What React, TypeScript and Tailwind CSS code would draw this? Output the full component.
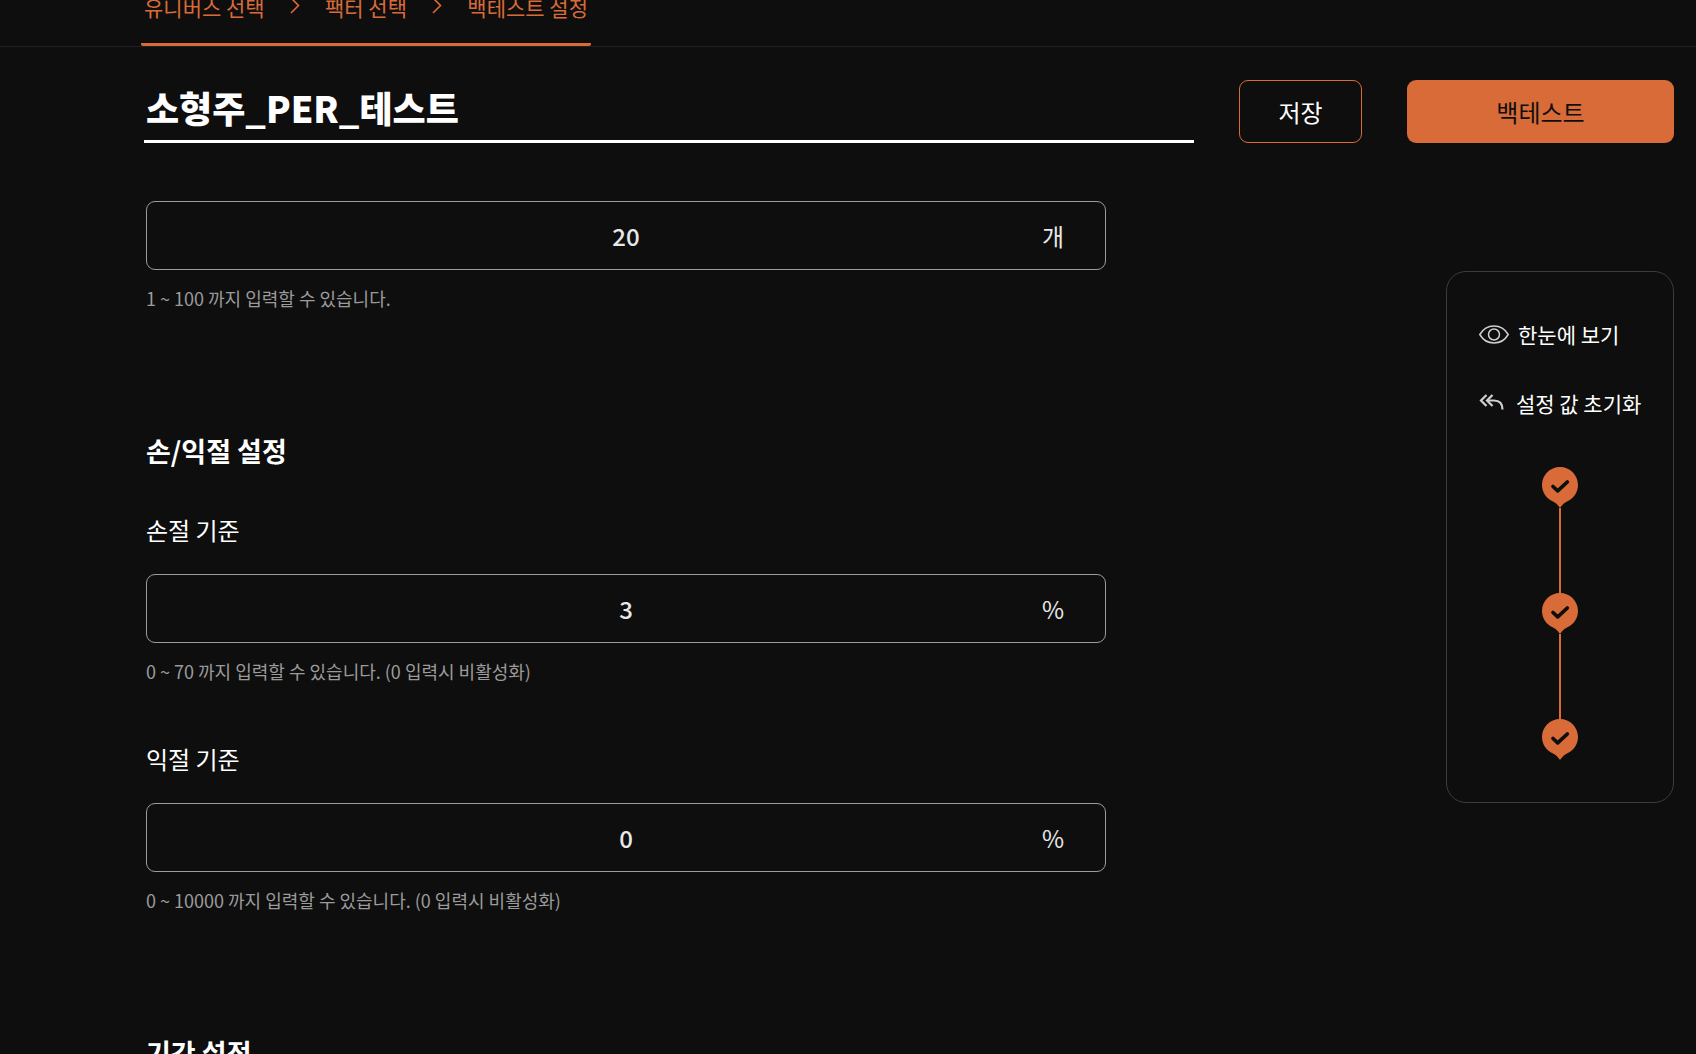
import React, { useState } from "react";

const steps = ["유니버스 선택", "팩터 선택", "백테스트 설정"];

export default function App() {
  const [name, setName] = useState("소형주_PER_테스트");

  return (
    <div className="h-screen overflow-hidden flex flex-col bg-[#0e0e0e] text-white font-['Noto_Sans_CJK_KR','Noto_Sans',sans-serif]">
      <StepNav />

      <header className="shrink-0 flex items-start pl-36 pr-[22px] pt-[33px]">
        <input
          aria-label="전략 이름"
          value={name}
          onChange={e => setName(e.target.value)}
          className="flex-1 min-w-0 h-[63px] border-b-[3px] border-white bg-transparent pl-[2px] pb-[6px] text-4xl font-black outline-none"
        />
        <button className="ml-[45px] w-[123px] h-[63px] rounded-[9px] border border-[#d96b38] text-2xl">저장</button>
        <button className="ml-[45px] w-[267px] h-[63px] rounded-[9px] bg-[#d96b38] text-2xl text-[#0e0e0e]">백테스트</button>
      </header>

      <div className="flex-1 min-h-0 flex items-start justify-between gap-8 pl-[146px] pr-[22px] pt-[58px]">
        <main className="w-full max-w-[960px]">
          <NumberField id="count" ariaLabel="종목 수" initial="20" unit="개" hint="1 ~ 100 까지 입력할 수 있습니다." />

          <SectionTitle>손/익절 설정</SectionTitle>
          <div className="flex flex-col gap-4">
            <NumberField id="stop-loss" label="손절 기준" initial="3" unit="%" hint="0 ~ 70 까지 입력할 수 있습니다. (0 입력시 비활성화)" />
            <NumberField id="take-profit" label="익절 기준" initial="0" unit="%" hint="0 ~ 10000 까지 입력할 수 있습니다. (0 입력시 비활성화)" />
          </div>

          <SectionTitle>기간 설정</SectionTitle>
        </main>

        <SidePanel />
      </div>
    </div>
  );
}

function StepNav() {
  return (
    <nav className="shrink-0 h-[47px] border-b border-[#202020] pl-[141px] flex">
      <ol className="w-[450px] h-[46px] flex items-start justify-between rounded-[2px] border-b-[3px] border-[#d96b38] px-[3px] text-[21px] leading-[30px] text-[#d96b38]">
        {steps.map((step, i) => (
          <React.Fragment key={step}>
            {i > 0 && (
              <li aria-hidden="true" className="-mt-1">
                <svg width="10" height="20" viewBox="0 0 10 20" fill="none" stroke="currentColor" strokeWidth="1.6">
                  <path d="M1 2l7.500 7.500L1 17" />
                </svg>
              </li>
            )}
            <li className="-mt-2">
              <a href="#">{step}</a>
            </li>
          </React.Fragment>
        ))}
      </ol>
    </nav>
  );
}

function SectionTitle({ children }: { children: React.ReactNode }) {
  return <h2 className="mt-[118px] text-[27px] leading-[42px] font-bold">{children}</h2>;
}

type NumberFieldProps = {
  id: string;
  label?: string;
  ariaLabel?: string;
  initial: string;
  unit: string;
  hint: string;
};

function NumberField({ id, label, ariaLabel, initial, unit, hint }: NumberFieldProps) {
  const [value, setValue] = useState(initial);

  return (
    <div>
      {label && (
        <label htmlFor={id} className="block pt-10 pb-[26px] text-2xl leading-9">
          {label}
        </label>
      )}
      <div className="relative">
        <input
          id={id}
          aria-label={ariaLabel}
          inputMode="numeric"
          value={value}
          onChange={e => setValue(e.target.value)}
          className="block w-full h-[69px] rounded-[9px] border border-[#9b9b9b] bg-transparent px-16 text-center text-2xl font-medium text-[#e8e8e8] outline-none"
        />
        <span className="absolute inset-y-0 right-[42px] flex items-center text-2xl text-[#e8e8e8]">{unit}</span>
      </div>
      <p className="mt-[14px] text-lg leading-7 text-[#9b9b9b]">{hint}</p>
    </div>
  );
}

function SidePanel() {
  return (
    <aside className="shrink-0 mt-[70px] w-[228px] rounded-[20px] border border-[#3c3c3c] pt-[46px] pb-[42px] pl-8 pr-4 text-[21px] leading-8">
      <button className="flex items-center gap-[9px] whitespace-nowrap">
        <EyeIcon />
        한눈에 보기
      </button>
      <button className="mt-[37px] flex items-center gap-[11px] whitespace-nowrap">
        <ReplyAllIcon />
        설정 값 초기화
      </button>
      <ol className="mt-12 -ml-4 flex flex-col items-center">
        {steps.map((step, i) => (
          <li key={step} aria-label={step} className="flex flex-col items-center">
            {i > 0 && <span className="w-0.5 h-[85px] bg-[#d96b38]" />}
            <StepPin />
          </li>
        ))}
      </ol>
    </aside>
  );
}

function StepPin() {
  return (
    <svg width="36" height="41" viewBox="0 0 36 41">
      <path d="M18 0C8 0 0 8 0 18c0 7.500 4.500 13.500 11 16.500 2.500 1.200 4.500 3.200 6.200 5.500q.8 1 1.600 0c1.700-2.300 3.700-4.300 6.200-5.500C31.500 31.500 36 25.500 36 18 36 8 28 0 18 0z" fill="#d96b38" />
      <path d="M11 19.500l4.700 4.300L25.300 15" fill="none" stroke="#0e0e0e" strokeWidth="3.700" strokeLinecap="round" strokeLinejoin="round" />
    </svg>
  );
}

function EyeIcon() {
  return (
    <svg width="30" height="22" viewBox="0 0 30 22" fill="none" stroke="#cfcfcf" strokeWidth="1.500">
      <path d="M.8 11.500C4 6 9 3 15 3S26 6 29.200 11.500C26 17 21 20 15 20S4 17 .8 11.500z" />
      <circle cx="15" cy="11.500" r="5.500" />
    </svg>
  );
}

function ReplyAllIcon() {
  return (
    <svg width="26" height="20" viewBox="0 0 26 20" fill="none" stroke="#cfcfcf" strokeWidth="2.200">
      <path d="M7.500 2L2 7.500 7.500 13" />
      <path d="M13.500 2L8 7.500l5.500 5.500" />
      <path d="M8 7.500h7c5.500 0 8.500 3 8.500 9" />
    </svg>
  );
}
